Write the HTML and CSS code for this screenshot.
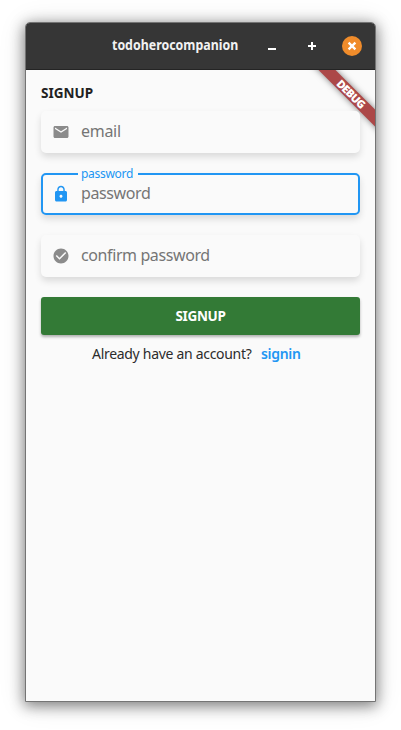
FILE: index.html
```html
<!DOCTYPE html>
<html lang="en">
<head>
<meta charset="utf-8">
<title>todoherocompanion</title>
<link rel="stylesheet" href="styles.css">
</head>
<body>
<div class="window">
  <header class="titlebar">
    <h1 class="title">todoherocompanion</h1>
    <div class="controls">
      <button class="control" aria-label="Minimize"><svg viewBox="0 0 20 20"><path d="M6 13h8"/></svg></button>
      <button class="control" aria-label="Maximize"><svg viewBox="0 0 20 20"><path d="M6 10h8M10 6v8"/></svg></button>
      <button class="control close" aria-label="Close"><svg viewBox="0 0 20 20"><path d="M6.6 6.6l6.8 6.8M13.4 6.6l-6.8 6.8"/></svg></button>
    </div>
  </header>
  <main class="content">
    <div class="banner"><span>DEBUG</span></div>
    <h2 class="heading">SIGNUP</h2>
    <div class="field">
      <svg class="icon" viewBox="0 0 24 24"><path d="M20 4H4c-1.100 0-1.990.9-1.990 2L2 18c0 1.100.9 2 2 2h16c1.100 0 2-.9 2-2V6c0-1.100-.9-2-2-2zm0 4l-8 5-8-5V6l8 5 8-5v2z"/></svg>
      <span class="hint email">email</span>
    </div>
    <div class="field focused">
      <span class="label">password</span>
      <svg class="icon" viewBox="0 0 24 24"><path d="M18 8h-1V6c0-2.760-2.240-5-5-5S7 3.240 7 6v2H6c-1.100 0-2 .9-2 2v10c0 1.100.9 2 2 2h12c1.100 0 2-.9 2-2V10c0-1.100-.9-2-2-2zm-6 9c-1.100 0-2-.9-2-2s.9-2 2-2 2 .9 2 2-.9 2-2 2zm3.100-9H8.900V6c0-1.710 1.390-3.100 3.100-3.100s3.100 1.390 3.100 3.100v2z"/></svg>
      <span class="hint password">password</span>
    </div>
    <div class="field">
      <svg class="icon" viewBox="0 0 24 24"><path d="M12 2C6.480 2 2 6.480 2 12s4.480 10 10 10 10-4.480 10-10S17.520 2 12 2zm-2 15l-5-5 1.410-1.410L10 14.170l7.590-7.590L19 8l-9 9z"/></svg>
      <span class="hint confirm">confirm password</span>
    </div>
    <button class="submit">SIGNUP</button>
    <p class="account"><span class="question">Already have an account?</span><a class="signin">signin</a></p>
  </main>
</div>
</body>
</html>
```
FILE: styles.css
```css
* { box-sizing: border-box; }
body {
  margin: 0;
  height: 730px;
  padding: 22px 25px 28px;
  background: #fff;
  overflow: hidden;
  font-family: "Noto Sans", "Open Sans", sans-serif;
}
button { border: 0; padding: 0; font-family: inherit; }
.window {
  width: 351px;
  height: 680px;
  border: 1px solid #747474;
  border-radius: 5px 5px 0 0;
  background: #fafafa;
  box-shadow: 0 3px 14px 1px rgba(0,0,0,.46), 0 2px 28px rgba(0,0,0,.12);
}
.titlebar {
  height: 47px;
  display: flex;
  align-items: center;
  padding: 0 13px 0 86px;
  background: #363636;
  border-bottom: 1px solid #242424;
  border-radius: 4px 4px 0 0;
}
.title {
  margin: 0 0 2px;
  width: 126px;
  color: #f2f2f2;
  font: 700 14px/20px "Noto Sans", sans-serif;
  transform: scaleX(.885);
  transform-origin: left;
  white-space: nowrap;
}
.controls { display: flex; gap: 20px; margin-left: auto; }
.control { width: 20px; height: 20px; border-radius: 50%; background: transparent; }
.control svg { display: block; width: 20px; height: 20px; fill: none; stroke: #fff; stroke-width: 2; }
.close { background: #f08c2b; }
.close svg { stroke-width: 2.3; }
.content { position: relative; height: 631px; padding: 15px 15px 0; overflow: hidden; }
.banner {
  position: absolute;
  left: 265px;
  top: 18px;
  width: 120px;
  height: 12px;
  background: #ac4848;
  box-shadow: 0 0 6px rgba(0,0,0,.5);
  transform: rotate(45deg);
  text-align: center;
  color: #fff;
  font-size: 11px;
  font-weight: 900;
  line-height: 12px;
  letter-spacing: -.6px;
}
.heading {
  margin: 0 0 10px;
  font-size: 13.500px;
  line-height: 16px;
  font-weight: 700;
  color: #212121;
}
.field {
  position: relative;
  display: flex;
  align-items: center;
  width: 319px;
  height: 42px;
  margin-bottom: 20px;
  padding-left: 11px;
  border-radius: 5px;
  background: #fafafa;
  box-shadow: 0 4px 7px rgba(0,0,0,.13);
}
.focused { border: 2px solid #2196f3; padding-left: 9px; }
.icon { width: 18px; height: 18px; margin: 0 11px 0 0; fill: #8b8b8b; }
.focused .icon { fill: #2196f3; }
.hint { color: #757575; font-size: 16px; line-height: 22px; white-space: nowrap; position: relative; top: -1px; letter-spacing: -.4px; }
.email { letter-spacing: -.3px; }
.label {
  position: absolute;
  left: 35px;
  top: -9px;
  width: 60px;
  padding-left: 3px;
  background: #fafafa;
  color: #2196f3;
  font-size: 12px;
  line-height: 15px;
  letter-spacing: -.3px;
}
.submit {
  display: block;
  width: 319px;
  height: 38px;
  border-radius: 3px;
  background: #337a36;
  box-shadow: 0 2px 3px rgba(0,0,0,.3);
  color: #fff;
  font-size: 13.500px;
  letter-spacing: -.3px;
  font-weight: 700;
}
.account {
  display: flex;
  gap: 9px;
  margin: 9px 0 0 51px;
  font-size: 14px;
  line-height: 20px;
  letter-spacing: -.3px;
  color: #2c2c2c;
  white-space: nowrap;
}
.question { width: 160px; }
.signin { color: #2196f3; font-weight: 600; }
```
